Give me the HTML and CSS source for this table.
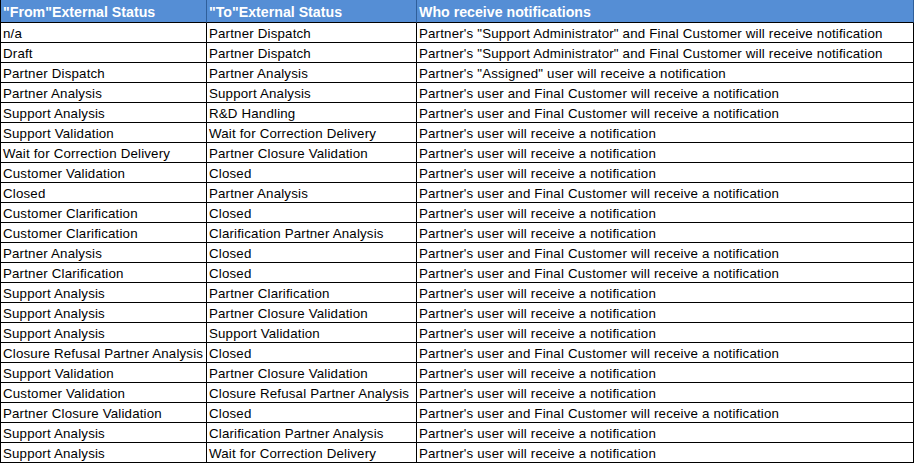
FILE: index.html
```html
<!DOCTYPE html>
<html>
<head>
<meta charset="utf-8">
<link rel="stylesheet" href="styles.css">
</head>
<body>
<div class="sheet">
  <div class="cell head">"From"External Status</div>
  <div class="cell head">"To"External Status</div>
  <div class="cell head">Who receive notifications</div>

  <div class="cell">n/a</div><div class="cell">Partner Dispatch</div><div class="cell">Partner's "Support Administrator" and Final Customer will receive notification</div>
  <div class="cell">Draft</div><div class="cell">Partner Dispatch</div><div class="cell">Partner's "Support Administrator" and Final Customer will receive notification</div>
  <div class="cell">Partner Dispatch</div><div class="cell">Partner Analysis</div><div class="cell">Partner's "Assigned" user will receive a notification</div>
  <div class="cell">Partner Analysis</div><div class="cell">Support Analysis</div><div class="cell">Partner's user and Final Customer will receive a notification</div>
  <div class="cell">Support Analysis</div><div class="cell">R&amp;D Handling</div><div class="cell">Partner's user and Final Customer will receive a notification</div>
  <div class="cell">Support Validation</div><div class="cell">Wait for Correction Delivery</div><div class="cell">Partner's user will receive a notification</div>
  <div class="cell">Wait for Correction Delivery</div><div class="cell">Partner Closure Validation</div><div class="cell">Partner's user will receive a notification</div>
  <div class="cell">Customer Validation</div><div class="cell">Closed</div><div class="cell">Partner's user will receive a notification</div>
  <div class="cell">Closed</div><div class="cell">Partner Analysis</div><div class="cell">Partner's user and Final Customer will receive a notification</div>
  <div class="cell">Customer Clarification</div><div class="cell">Closed</div><div class="cell">Partner's user will receive a notification</div>
  <div class="cell">Customer Clarification</div><div class="cell">Clarification Partner Analysis</div><div class="cell">Partner's user will receive a notification</div>
  <div class="cell">Partner Analysis</div><div class="cell">Closed</div><div class="cell">Partner's user and Final Customer will receive a notification</div>
  <div class="cell">Partner Clarification</div><div class="cell">Closed</div><div class="cell">Partner's user and Final Customer will receive a notification</div>
  <div class="cell">Support Analysis</div><div class="cell">Partner Clarification</div><div class="cell">Partner's user will receive a notification</div>
  <div class="cell">Support Analysis</div><div class="cell">Partner Closure Validation</div><div class="cell">Partner's user will receive a notification</div>
  <div class="cell">Support Analysis</div><div class="cell">Support Validation</div><div class="cell">Partner's user will receive a notification</div>
  <div class="cell">Closure Refusal Partner Analysis</div><div class="cell">Closed</div><div class="cell">Partner's user and Final Customer will receive a notification</div>
  <div class="cell">Support Validation</div><div class="cell">Partner Closure Validation</div><div class="cell">Partner's user will receive a notification</div>
  <div class="cell">Customer Validation</div><div class="cell">Closure Refusal Partner Analysis</div><div class="cell">Partner's user will receive a notification</div>
  <div class="cell">Partner Closure Validation</div><div class="cell">Closed</div><div class="cell">Partner's user and Final Customer will receive a notification</div>
  <div class="cell">Support Analysis</div><div class="cell">Clarification Partner Analysis</div><div class="cell">Partner's user will receive a notification</div>
  <div class="cell">Support Analysis</div><div class="cell">Wait for Correction Delivery</div><div class="cell">Partner's user will receive a notification</div>
</div>
</body>
</html>
```
FILE: styles.css
```css
html, body {
  margin: 0;
  padding: 0;
  background: #ffffff;
}

.sheet {
  display: grid;
  grid-template-columns: 206px 210px 497px;
  grid-template-rows: 23px;
  grid-auto-rows: 20px;
  width: 914px;
  border-left: 1px solid #000000;
  box-sizing: border-box;
  font-family: "Liberation Sans", Arial, sans-serif;
  font-size: 13.3px;
  letter-spacing: 0.18px;
  color: #000000;
}

.cell {
  box-sizing: border-box;
  border-right: 1px solid #000000;
  border-bottom: 1px solid #000000;
  padding: 0 0 1px 2px;
  white-space: nowrap;
  overflow: hidden;
  display: flex;
  align-items: flex-end;
  line-height: 15px;
}

.head {
  background: #558ed5;
  color: #ffffff;
  font-weight: bold;
  font-size: 14.2px;
  letter-spacing: 0;
  padding-bottom: 2px;
  border-right-color: #2f5f9a;
}

.head:last-child {
  border-right-color: #000000;
}
```
